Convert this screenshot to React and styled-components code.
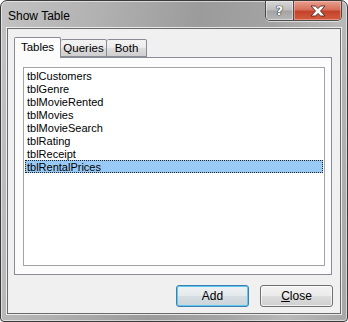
import styled, { createGlobalStyle } from "styled-components"

const Global = createGlobalStyle`
    html, body{
        margin: 0;
        padding: 0;
        background: #ffffff;
    }
    body{
        font-family: "Liberation Sans", Arial, sans-serif;
        font-size: 11px;
        color: #000000;
    }
`

const tables = [
    "tblCustomers",
    "tblGenre",
    "tblMovieRented",
    "tblMovies",
    "tblMovieSearch",
    "tblRating",
    "tblReceipt",
    "tblRentalPrices",
]

export default function App(){
    return(
        <>
            <Global/>
            <Window>
                <TitleBar>
                    <Title>Show Table</Title>
                    <Caption>
                        <HelpButton><span>?</span></HelpButton>
                        <CloseButton>
                            <svg width="18" height="12" viewBox="0 0 18 12">
                                <path d="M2 1 L6.5 1 L9 3.6 L11.5 1 L16 1 L11.5 6 L16 11 L11.5 11 L9 8.4 L6.5 11 L2 11 L6.5 6 Z"
                                    fill="#ffffff" stroke="#5a2318" strokeWidth="0.9" strokeLinejoin="round"/>
                            </svg>
                        </CloseButton>
                    </Caption>
                </TitleBar>
                <Client>
                    <TabStrip>
                        <Tab active width={47}>Tables</Tab>
                        <Tab width={46}>Queries</Tab>
                        <Tab width={40}>Both</Tab>
                    </TabStrip>
                    <TabPanel>
                        <ListBox>
                            {tables.map((t, i) => (
                                <Row key={t} selected={i === tables.length - 1}>{t}</Row>
                            ))}
                        </ListBox>
                    </TabPanel>
                    <Buttons>
                        <Button primary>Add</Button>
                        <Button><u>C</u>lose</Button>
                    </Buttons>
                </Client>
            </Window>
        </>
    )
}

const Window = styled.div`
    width: 348px;
    height: 322px;
    box-sizing: border-box;
    display: flex;
    flex-direction: column;
    border: 1px solid #3a3a3a;
    border-radius: 7px 7px 4px 4px;
    background: linear-gradient(100deg, #c2c2c2 0%, #b1b1b1 25%, #9b9b9b 50%, #a3a3a3 68%, #b9b9b9 85%, #a6a6a6 100%);
    box-shadow: inset 0 0 0 1px rgba(255,255,255,0.55);
    padding: 0 6px 7px 6px;
    overflow: hidden;
`

const TitleBar = styled.div`
    height: 27px;
    display: flex;
    align-items: flex-start;
`

const Title = styled.div`
    font-size: 12px;
    color: #000000;
    margin-top: 8px;
    margin-left: 1px;
`

const Caption = styled.div`
    margin-left: auto;
    margin-right: -1px;
    display: flex;
    height: 19px;
    border: 1px solid #4b4b4b;
    border-top: none;
    border-radius: 0 0 5px 5px;
    overflow: hidden;
    box-shadow: 0 1px 0 rgba(255,255,255,0.6);
`

const HelpButton = styled.div`
    width: 27px;
    display: flex;
    align-items: center;
    justify-content: center;
    border-right: 1px solid #4b4b4b;
    background: linear-gradient(#d6d6d6 0%, #bdbdbd 48%, #a3a3a3 52%, #b6b6b6 100%);
    box-shadow: inset 0 0 0 1px rgba(255,255,255,0.45);

    span{
        font-family: "DejaVu Sans", sans-serif;
        font-weight: 700;
        font-size: 13px;
        color: #ffffff;
        text-shadow: 0 0 1px #2a2a2a, 0 0 1px #2a2a2a, 0 0 1px #2a2a2a;
    }
`

const CloseButton = styled.div`
    width: 47px;
    display: flex;
    align-items: center;
    justify-content: center;
    background: linear-gradient(#e9a191 0%, #d7705c 45%, #c4432b 55%, #d35c3f 100%);
    box-shadow: inset 0 0 0 1px rgba(255,210,200,0.45);
`

const Client = styled.div`
    flex: 1;
    display: flex;
    flex-direction: column;
    background: #f0f0f0;
    border: 1px solid #6a6a6a;
    box-shadow: 0 0 0 1px rgba(255,255,255,0.75);
    padding: 8px 7px 6px 6px;
`

const TabStrip = styled.div`
    display: flex;
    align-items: flex-end;
    height: 20px;
`

const Tab = styled.div`
    position: relative;
    z-index: ${p => p.active ? 1 : 0};
    box-sizing: border-box;
    width: ${p => p.width}px;
    height: ${p => p.active ? "21px" : "18px"};
    margin-bottom: ${p => p.active ? "-1px" : "0"};
    padding-top: ${p => p.active ? "3px" : "2px"};
    text-align: center;
    border: 1px solid #898c95;
    border-bottom: ${p => p.active ? "none" : "1px solid #898c95"};
    border-left: ${p => p.active ? "1px solid #898c95" : "none"};
    border-radius: 2px 2px 0 0;
    background: ${p => p.active ? "#fcfcfc" : "linear-gradient(#f3f3f3 0%, #ebebeb 50%, #dddddd 51%, #cfcfcf 100%)"};
    font-size: 11.5px;
    line-height: 13px;
    color: #000000;
`

const TabPanel = styled.div`
    width: 318px;
    height: 218px;
    box-sizing: border-box;
    border: 1px solid #898c95;
    background: #fcfcfc;
    padding: 9px 6px 8px 8px;
    display: flex;
`

const ListBox = styled.div`
    flex: 1;
    border: 1px solid #a3a3a3;
    background: #ffffff;
    padding: 1px 1px;
    display: flex;
    flex-direction: column;
`

const Row = styled.div`
    height: 13px;
    box-sizing: border-box;
    line-height: 12px;
    padding-left: 1px;
    font-size: 11px;
    background: ${p => p.selected ? "#99c9f5" : "transparent"};
    border: 1px dotted ${p => p.selected ? "#222222" : "transparent"};
`

const Buttons = styled.div`
    margin-top: auto;
    display: flex;
    justify-content: flex-end;
    gap: 11px;
`

const Button = styled.div`
    width: 73px;
    height: 22px;
    box-sizing: border-box;
    display: flex;
    align-items: center;
    justify-content: center;
    font-size: 12px;
    border: 1px solid ${p => p.primary ? "#3c7fb1" : "#707070"};
    border-radius: 3px;
    background: ${p => p.primary
        ? "linear-gradient(#eef2f4 0%, #e4e9ec 50%, #d5dde2 51%, #cbd4d9 100%)"
        : "linear-gradient(#f2f2f2 0%, #ebebeb 50%, #dddddd 51%, #cfcfcf 100%)"};
    box-shadow: inset 0 0 0 1px ${p => p.primary ? "#5ec9f0" : "rgba(255,255,255,0.7)"};
`
